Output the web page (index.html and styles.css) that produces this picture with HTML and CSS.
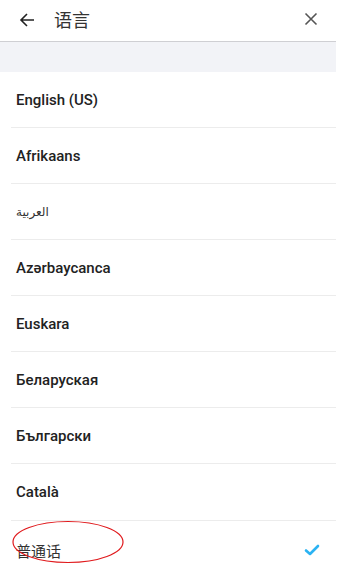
FILE: index.html
```html
<!DOCTYPE html>
<html lang="zh">
<head>
<meta charset="utf-8">
<link rel="stylesheet" href="styles.css">
</head>
<body>
<div class="page">
  <header class="header">
    <svg class="back" width="16" height="16" viewBox="0 0 16 16"><path d="M15 8H2M8 2L2 8l6 6" fill="none" stroke="#222" stroke-width="1.6"/></svg>
    <span class="title">语言</span>
    <svg class="close" width="14" height="14" viewBox="0 0 14 14"><path d="M1.5 1.5l11 11M12.5 1.5l-11 11" fill="none" stroke="#555" stroke-width="1.6"/></svg>
  </header>
  <div class="band"></div>
  <ul class="list">
    <li class="item"><span class="name">English (US)</span></li>
    <li class="item"><span class="name">Afrikaans</span></li>
    <li class="item"><span class="name ar">العربية</span></li>
    <li class="item"><span class="name">Azərbaycanca</span></li>
    <li class="item"><span class="name">Euskara</span></li>
    <li class="item"><span class="name">Беларуская</span></li>
    <li class="item"><span class="name">Български</span></li>
    <li class="item tall"><span class="name">Català</span></li>
    <li class="item selected"><span class="name zh">普通话</span>
      <svg class="check" width="16" height="12" viewBox="0 0 16 12"><path d="M2 6.5l4 3.5 8-8" fill="none" stroke="#2bb3f3" stroke-width="2.6" stroke-linecap="round" stroke-linejoin="round"/></svg>
      <svg class="mark" width="114" height="44" viewBox="0 0 114 44"><ellipse cx="57" cy="22" rx="55" ry="20.5" fill="none" stroke="#e0191c" stroke-width="1.2"/></svg>
    </li>
  </ul>
</div>
</body>
</html>
```
FILE: styles.css
```css
html, body { margin: 0; padding: 0; background: #fff; }
body { font-family: Roboto, "Noto Sans CJK SC", sans-serif; color: #222; }
.page { width: 336px; }
.header { height: 41px; border-bottom: 1px solid #cfcfd3; display: flex; align-items: center; padding: 0 18px 0 19px; box-sizing: content-box; }
.back { flex: none; margin-top: -1px; }
.title { font-family: "Noto Sans CJK SC", sans-serif; font-size: 18px; color: #333; margin-left: 19px; flex: 1; margin-top: -4px; }
.close { flex: none; margin-top: -3px; }
.band { height: 30px; background: #f2f3f7; }
.list { list-style: none; margin: 0; padding: 0 0 0 11px; }
.item { height: 55px; border-bottom: 1px solid #ececec; display: flex; align-items: center; padding-left: 5px; padding-right: 16px; position: relative; }
.item.tall { height: 56px; }
.name { font-size: 15px; font-weight: 500; color: #222; flex: 1; margin-top: 0; }
.name.ar { font-family: "DejaVu Sans", sans-serif; font-weight: 400; font-size: 12px; color: #333; }
.name.zh { font-family: "Noto Sans CJK SC", sans-serif; font-weight: 400; font-size: 15px; color: #333; margin-top: 3px; }
.selected { border-bottom: none; }
.check { flex: none; margin-top: 3px; }
.mark { position: absolute; left: 0; top: -1px; }
```
